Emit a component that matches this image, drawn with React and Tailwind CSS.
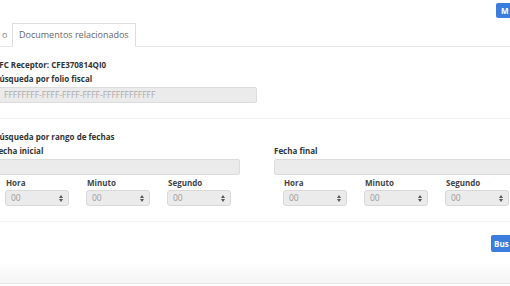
import React from "react";

function Sel() {
  return (
    <div className="w-[64px] h-[16px] rounded-[3px] bg-[#ebebeb] border border-[#d9d9d9] flex items-center justify-between px-[5px] text-[8.5px] text-[#9a9a9a]">
      <span>00</span>
      <svg width="4" height="7" viewBox="0 0 4 7"><path d="M0 3 L2 0 L4 3Z M0 4 L2 7 L4 4Z" fill="#555" /></svg>
    </div>
  );
}

function TimeGroup({ ml }) {
  return (
    <div className={`flex gap-[17px] ${ml}`}>
      {["Hora", "Minuto", "Segundo"].map((l) => (
        <div key={l} className="flex flex-col shrink-0">
          <div className="text-[8px] font-bold text-[#444] h-[15px] leading-[15px] pl-[1px]">{l}</div>
          <Sel />
        </div>
      ))}
    </div>
  );
}

export default function App() {
  return (
    <div className="w-[510px] h-[286px] overflow-hidden bg-white relative" style={{ fontFamily: '"Open Sans", "Liberation Sans", sans-serif' }}>
      <div className="flex justify-end h-[23px] pt-[3px]">
        <div className="w-[20px] h-[15px] bg-[#3b7ddd] rounded-l-[2px] text-white text-[8px] font-bold pl-[5px] leading-[15px] -mr-[6px]">M</div>
      </div>
      <div className="flex items-end border-b border-[#e6e6e6] h-[24px]">
        <div className="w-[12px] h-[23px] text-[9px] text-[#888] leading-[23px] pl-[2px]">o</div>
        <div className="h-[24px] px-[6px] border border-[#ddd] border-b-white bg-white text-[9px] text-[#666] leading-[22px] -mb-px">Documentos relacionados</div>
      </div>
      <div className="-ml-[6px]">
        <div className="pt-[11px] text-[8px] font-bold text-[#333] leading-[14px]">RFC Receptor: CFE370814QI0</div>
        <div className="text-[8px] font-bold text-[#333] leading-[14px]">Búsqueda por folio fiscal</div>
        <div className="mt-[1px] w-[263px] h-[16px] bg-[#ebebeb] border border-[#dcdcdc] rounded-[2px] text-[8.5px] text-[#aaa] pl-[9px] leading-[14px]">FFFFFFFF-FFFF-FFFF-FFFF-FFFFFFFFFFFF</div>
        <div className="mt-[15px] border-t border-[#f1f1f1] w-[530px]"></div>
        <div className="pt-[11px] text-[8px] font-bold text-[#333] leading-[14px]">Búsqueda por rango de fechas</div>
        <div className="flex">
          <div className="w-[280px] shrink-0">
            <div className="text-[8px] font-bold text-[#333] leading-[14px]">Fecha inicial</div>
            <div className="mt-[1px] w-[246px] h-[16px] bg-[#ebebeb] border border-[#dcdcdc] rounded-[2px]"></div>
            <TimeGroup ml="ml-[11px]" />
          </div>
          <div className="w-[260px] shrink-0">
            <div className="text-[8px] font-bold text-[#333] leading-[14px]">Fecha final</div>
            <div className="mt-[1px] w-[260px] h-[16px] bg-[#ebebeb] border border-[#dcdcdc] rounded-[2px]"></div>
            <TimeGroup ml="ml-[9px]" />
          </div>
        </div>
        <div className="mt-[15px] border-t border-[#f3f3f3] w-[530px]"></div>
      </div>
      <div className="flex justify-end pt-[13px]">
        <div className="w-[20px] h-[17px] bg-[#3b7ddd] rounded-l-[2px] text-white text-[8px] font-bold pl-[3px] leading-[17px] -mr-[1px]">Bus</div>
      </div>
      <div className="absolute left-0 right-0 bottom-[2px] h-[22px] bg-gradient-to-b from-white to-[#f4f4f4] border-b border-[#e8e8e8]"></div>
    </div>
  );
}
